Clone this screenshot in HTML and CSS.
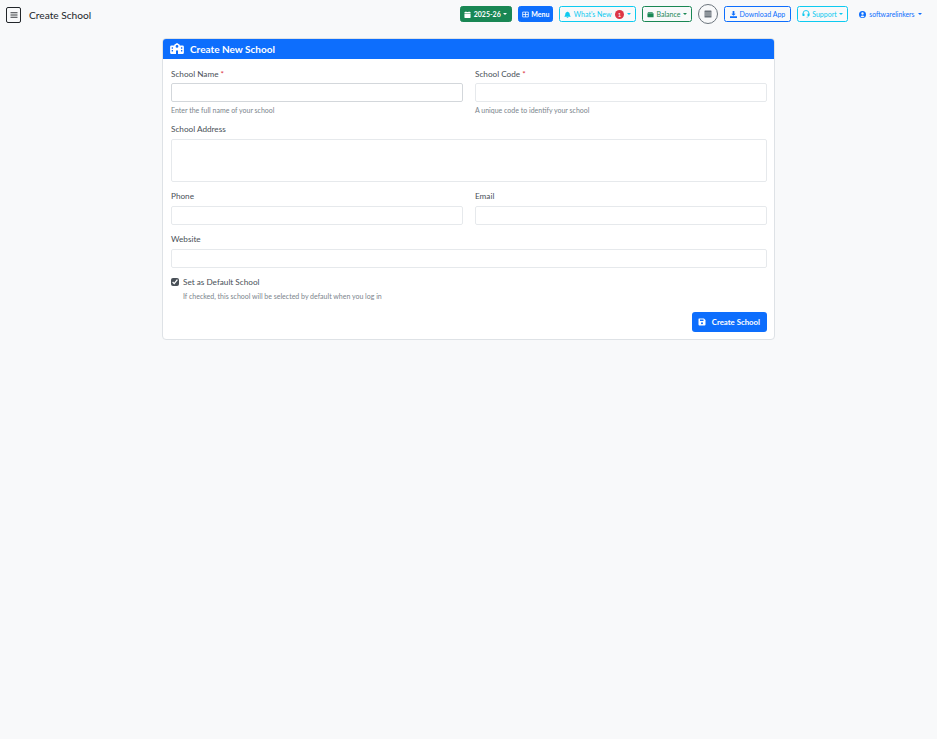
FILE: index.html
```html
<!DOCTYPE html>
<html lang="en">
<head>
<meta charset="utf-8">
<title>Create School</title>
<link rel="stylesheet" href="styles.css">
</head>
<body>
<header class="topbar">
  <div class="topbar-left">
    <button class="toggle" type="button" aria-label="Toggle sidebar">
      <svg viewBox="0 0 16 16" width="8" height="8"><path d="M1 3.500h14M1 8h14M1 12.500h14" stroke="#212529" stroke-width="1.800" fill="none"/></svg>
    </button>
    <span class="page-title">Create School</span>
  </div>
  <nav class="topbar-right">
    <button class="btn btn-green" type="button">
      <svg class="ico" viewBox="0 0 16 16"><path fill="currentColor" d="M4 0h1v2h6V0h1v2h2a1 1 0 0 1 1 1v2H1V3a1 1 0 0 1 1-1h2zM1 6h14v8a2 2 0 0 1-2 2H3a2 2 0 0 1-2-2z"/></svg>
      2025-26<i class="caret"></i>
    </button>
    <button class="btn btn-blue" type="button">
      <svg class="ico" viewBox="0 0 16 16"><path fill="none" stroke="currentColor" stroke-width="1.700" d="M1.500 2.500h13v11h-13zM8 2.500v11M1.500 8h13"/></svg>
      Menu
    </button>
    <button class="btn btn-cyan" type="button">
      <svg class="ico" viewBox="0 0 16 16"><path fill="currentColor" d="M8 16a2 2 0 0 0 2-2H6a2 2 0 0 0 2 2zM8 1a1 1 0 0 1 1 1c2.500.5 4 2.500 4 5 0 2 .5 3.500 2 5v1H1v-1c1.500-1.500 2-3 2-5 0-2.500 1.500-4.500 4-5a1 1 0 0 1 1-1z"/></svg>
      What's New<span class="badge">1</span><i class="caret"></i>
    </button>
    <button class="btn btn-green-line" type="button">
      <svg class="ico" viewBox="0 0 16 16"><path fill="currentColor" d="M2 2h11v2H2zM1 5h14v9H2a1 1 0 0 1-1-1z"/></svg>
      Balance<i class="caret"></i>
    </button>
    <button class="btn-round" type="button" aria-label="Calculator">
      <svg viewBox="0 0 16 16" width="8" height="8"><path fill="#6c757d" d="M2 1h12a1 1 0 0 1 1 1v12a1 1 0 0 1-1 1H2a1 1 0 0 1-1-1V2a1 1 0 0 1 1-1z"/><path stroke="#f8f9fa" stroke-width="1" d="M1 6h14M1 10h14"/></svg>
    </button>
    <button class="btn btn-blue-line" type="button">
      <svg class="ico" viewBox="0 0 16 16"><path fill="currentColor" d="M6 0h4v6h3L8 11 3 6h3zM0 12h16v4H0z"/></svg>
      Download App
    </button>
    <button class="btn btn-cyan" type="button">
      <svg class="ico ico-md" viewBox="0 0 16 16"><path fill="none" stroke="currentColor" stroke-width="1.800" d="M2 9V7a6 6 0 0 1 12 0v2"/><rect x="1" y="7" width="4" height="5" rx="1" fill="currentColor"/><rect x="11" y="7" width="4" height="5" rx="1" fill="currentColor"/><path fill="none" stroke="currentColor" stroke-width="1.300" d="M13 12c0 2-2 2.500-4 2.500"/></svg>
      Support<i class="caret"></i>
    </button>
    <button class="user" type="button">
      <svg class="ico" viewBox="0 0 16 16"><path fill="currentColor" fill-rule="evenodd" d="M8 0a8 8 0 1 1 0 16A8 8 0 0 1 8 0zm0 3a2.800 2.800 0 1 0 0 5.600A2.800 2.800 0 0 0 8 3zM3.500 12.200A5.800 5.800 0 0 0 8 14.300a5.800 5.800 0 0 0 4.500-2.100C11.500 10.700 9.800 10 8 10s-3.500.7-4.500 2.200z"/></svg>
      softwarelinkers<i class="caret"></i>
    </button>
  </nav>
</header>
<main class="content">
  <section class="card">
    <h1 class="card-header">
      <svg viewBox="0 0 640 512" width="14" height="11"><path fill="#fff" d="M320 0l128 80v32h128a64 64 0 0 1 64 64v272a64 64 0 0 1-64 64H64a64 64 0 0 1-64-64V176a64 64 0 0 1 64-64h128V80zm0 96a64 64 0 1 0 0 128 64 64 0 0 0 0-128zM272 512h96V384a48 48 0 0 0-96 0zM72 200v64h64v-64zm432 0v64h64v-64zM72 328v64h64v-64zm432 0v64h64v-64z" fill-rule="evenodd"/></svg>
      Create New School
    </h1>
    <form class="card-body">
      <div class="row row-first">
        <div class="field"><label class="label">School Name <span class="req">*</span></label><input class="input strong" type="text"><small class="hint">Enter the full name of your school</small></div>
        <div class="field"><label class="label">School Code <span class="req">*</span></label><input class="input" type="text"><small class="hint">A unique code to identify your school</small></div>
      </div>
      <div class="field"><label class="label">School Address</label><textarea class="input area"></textarea></div>
      <div class="row">
        <div class="field"><label class="label">Phone</label><input class="input" type="text"></div>
        <div class="field"><label class="label">Email</label><input class="input" type="email"></div>
      </div>
      <div class="field"><label class="label">Website</label><input class="input" type="text"></div>
      <div class="check">
        <input class="checkbox" type="checkbox" checked>
        <div><label class="label check-label">Set as Default School</label><small class="hint check-hint">If checked, this school will be selected by default when you log in</small></div>
      </div>
      <div class="actions">
        <button class="submit" type="button">
          <svg class="ico ico-md" viewBox="0 0 16 16"><path fill="currentColor" fill-rule="evenodd" d="M2 1h10l3 3v9a2 2 0 0 1-2 2H3a2 2 0 0 1-2-2V2a1 1 0 0 1 1-1zm2 2v3h7V3zm4 5.500a2 2 0 1 0 0 4 2 2 0 0 0 0-4z"/></svg>
          Create School
        </button>
      </div>
    </form>
  </section>
</main>
</body>
</html>
```
FILE: styles.css
```css
* { box-sizing: border-box; }
html, body { height: 100%; }
body {
  margin: 0;
  background: #f8f9fa;
  color: #212529;
  font-family: Lato, "Noto Sans", sans-serif;
  font-size: 8px;
}
button { font-family: inherit; cursor: pointer; }

.topbar {
  display: flex;
  justify-content: space-between;
  align-items: center;
  height: 29px;
  padding: 0 15px 1px 6px;
}
.topbar-left { display: flex; align-items: center; gap: 8px; }
.toggle {
  display: flex;
  align-items: center;
  justify-content: center;
  width: 15px;
  height: 16px;
  margin-top: 2px;
  padding: 0;
  background: transparent;
  border: 1px solid #212529;
  border-radius: 2px;
}
.page-title { margin-top: 2px; font-size: 10.200px; color: #212529; }
.topbar-right { display: flex; align-items: center; gap: 6px; }

.btn {
  display: inline-flex;
  align-items: center;
  gap: 2.500px;
  height: 16px;
  padding: 0 4px;
  font-size: 7px;
  background: transparent;
  border: 1px solid transparent;
  border-radius: 2.500px;
  white-space: nowrap;
}
.ico { width: 7px; height: 7px; flex: none; }
.ico-md { width: 8px; height: 8px; }
.caret {
  display: inline-block;
  border-top: 2px solid currentColor;
  border-left: 2px solid transparent;
  border-right: 2px solid transparent;
}
.btn-green { padding: 0 3.500px; background: #198754; color: #fff; border-color: #198754; font-weight: 700; }
.btn-blue { padding: 0 3px; background: #0d6efd; color: #fff; border-color: #0d6efd; font-weight: 700; }
.btn-cyan { color: #0dcaf0; border-color: #0dcaf0; }
.btn-green-line { padding: 0 4.500px; color: #198754; border-color: #198754; }
.btn-blue-line { padding: 0 4.500px; color: #0d6efd; border-color: #0d6efd; }
.badge {
  display: inline-flex;
  align-items: center;
  justify-content: center;
  width: 9px;
  height: 9px;
  margin-left: 1px;
  border-radius: 50%;
  background: #dc3545;
  color: #fff;
  font-size: 6px;
}
.btn-round {
  display: flex;
  align-items: center;
  justify-content: center;
  width: 20px;
  height: 20px;
  padding: 0;
  background: transparent;
  border: 1px solid #6c757d;
  border-radius: 50%;
}
.user {
  display: inline-flex;
  align-items: center;
  gap: 3.500px;
  height: 16px;
  padding: 0;
  margin-left: 4.500px;
  font-size: 6.800px;
  color: #0d6efd;
  background: transparent;
  border: 0;
}

.content { display: flex; justify-content: center; padding-top: 9px; }
.card {
  width: 613px;
  background: #fff;
  border: 1px solid #dee2e6;
  border-radius: 4px;
  overflow: hidden;
}
.card-header {
  display: flex;
  align-items: center;
  gap: 6px;
  height: 20px;
  margin: 0;
  padding: 0 7px 1px;
  background: #0d6efd;
  color: #fff;
  font-size: 10px;
  font-weight: 700;
}
.card-body { display: block; padding: 8px 7px 7px 8px; }
.row { display: flex; gap: 12px; }
.field { flex: 1; display: flex; flex-direction: column; margin-bottom: 8px; }
.label { display: block; height: 16px; font-size: 8.200px; line-height: 13px; color: #495057; }
.row-first .label { line-height: 15px; }
.req { color: #dc3545; }
.input {
  display: block;
  width: 100%;
  height: 19px;
  padding: 2px 4px;
  background: #fff;
  border: 1px solid #e6e9ec;
  border-radius: 2px;
  outline: 0;
  font: inherit;
}
.strong { border-color: #d3d7db; }
.area { height: 43px; resize: none; }
.hint { display: block; margin-top: 4px; font-size: 7px; line-height: 9px; color: #7b848c; }
.check { display: flex; gap: 4px; margin-top: 1px; }
.checkbox { width: 8px; height: 8px; margin: 2px 0 0; accent-color: #495057; }
.check-label { height: 14px; }
.check-hint { margin-top: 2px; }
.actions { display: flex; justify-content: flex-end; margin-top: 11px; }
.submit {
  display: inline-flex;
  align-items: center;
  gap: 6px;
  height: 20px;
  padding: 0 7px 0 6px;
  background: #0d6efd;
  color: #fff;
  border: 0;
  border-radius: 3px;
  font-size: 7.800px;
  font-weight: 700;
}
```
